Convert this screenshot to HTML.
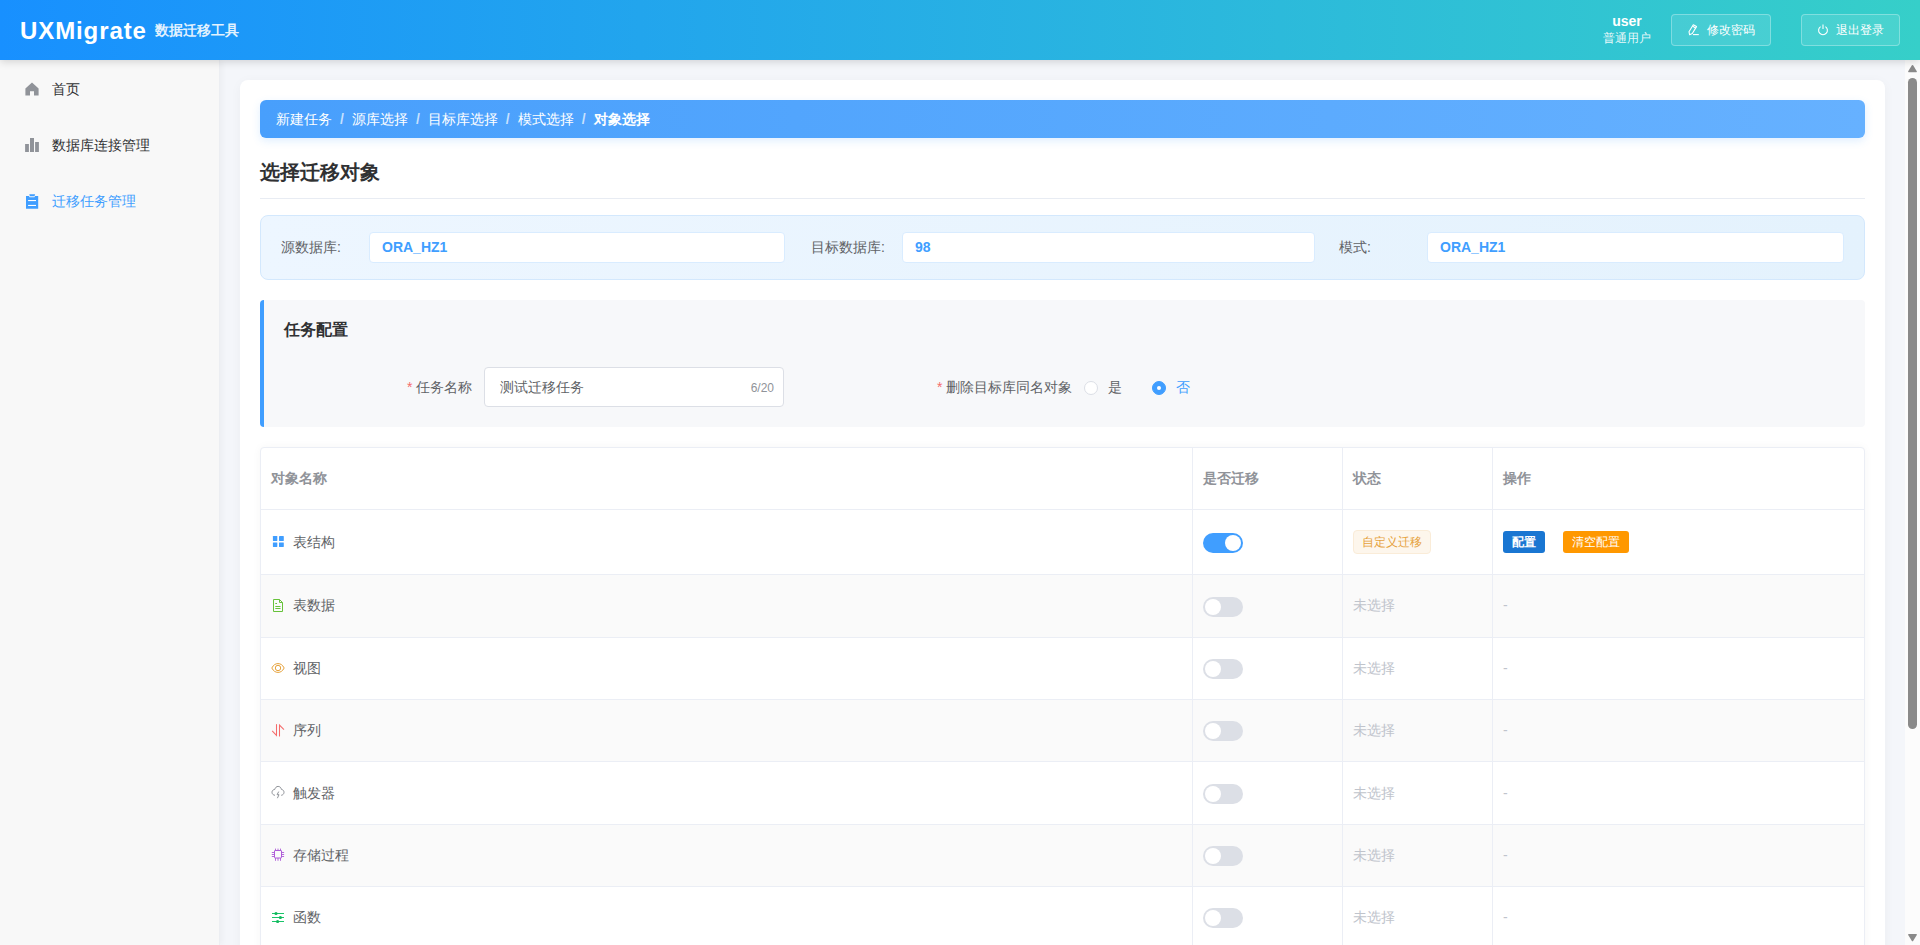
<!DOCTYPE html>
<html><head><meta charset="utf-8">
<style>
*{box-sizing:border-box;margin:0;padding:0}
html,body{width:1920px;height:945px;overflow:hidden;font-family:"Liberation Sans",sans-serif;font-size:14px;color:#606266;background:#f4f6fa}
.hdr{position:absolute;left:0;top:0;width:1920px;height:60px;background:linear-gradient(90deg,#1890ff 0%,#36cfc9 100%);box-shadow:0 2px 8px rgba(0,0,0,.15);z-index:5}
.logo{position:absolute;left:20px;top:16px;font-size:24px;font-weight:bold;color:#fff;line-height:30px;letter-spacing:0.9px}
.sub{position:absolute;left:155px;top:21px;font-size:14px;font-weight:bold;color:rgba(255,255,255,.88);line-height:18px}
.uname{position:absolute;left:1603px;top:12px;width:48px;text-align:center;color:#fff;font-weight:bold;font-size:14px;line-height:18px}
.urole{position:absolute;left:1603px;top:31px;width:48px;text-align:center;color:rgba(255,255,255,.9);font-size:12px;line-height:15px}
.hbtn{position:absolute;top:14px;height:32px;border:1px solid rgba(255,255,255,.3);background:rgba(255,255,255,.1);border-radius:4px;color:#fff;font-size:12px;line-height:30px}
.hbtn svg{position:absolute;top:9px}
.hbtn span{position:absolute;top:0;font-weight:500}
.side{position:absolute;left:0;top:60px;width:220px;height:885px;background:#f8f8f8;border-right:1px solid #eceef2;box-shadow:2px 0 6px rgba(0,0,0,.04);z-index:2}
.mi{position:absolute;left:0;width:219px;height:56px}
.mi svg{position:absolute;left:25px;top:22px}
.mi span{position:absolute;left:52px;top:20px;line-height:18px;color:#303133}
.main{position:absolute;left:220px;top:60px;width:1685px;height:885px;background:#f4f6fa;overflow:hidden}
.card{position:absolute;left:20px;top:20px;width:1645px;height:1000px;background:#fff;border-radius:8px;box-shadow:0 2px 12px rgba(0,0,0,.04)}
.sb{position:absolute;left:1905px;top:60px;width:15px;height:885px;background:#fcfcfc}
.bc{position:absolute;left:20px;top:20px;width:1605px;height:38px;border-radius:6px;background:linear-gradient(90deg,#489ffc,#66b1ff);box-shadow:0 3px 8px rgba(64,158,255,.16);color:#fff;font-size:14px;line-height:38px;padding-left:16px;white-space:nowrap}
.bc .s{display:inline-block;margin:0 8px;font-weight:bold;color:rgba(255,255,255,.7)}
.bc b{font-weight:bold}
.ttl{position:absolute;left:20px;top:80px;font-size:20px;font-weight:bold;color:#303133;line-height:24px}
.hr{position:absolute;left:20px;top:118px;width:1605px;height:1px;background:#e8ecf3}
.info{position:absolute;left:20px;top:135px;width:1605px;height:65px;border:1px solid #d3e8fd;border-radius:8px;background:linear-gradient(90deg,#edf6ff,#e4f2fd)}
.lbl{position:absolute;top:22px;line-height:18px;color:#606266}
.inp{position:absolute;top:16px;height:31px;background:#fff;border:1px solid #d9ecff;border-radius:4px;color:#409eff;font-weight:bold;line-height:28px;padding-left:12px}
.cfg{position:absolute;left:20px;top:220px;width:1605px;height:127px;background:#f7f8fa;border-left:4px solid #409eff;border-radius:4px}
.cfg h3{position:absolute;left:20px;top:20px;font-size:16px;font-weight:bold;color:#303133;line-height:20px}
.req{color:#f56c6c;margin-right:4px}
.tbl{position:absolute;left:20px;top:367px;width:1605px;height:600px;border:1px solid #ebeef5;border-radius:4px;box-shadow:0 0 10px rgba(0,0,0,.04);background:#fff;overflow:hidden}
.row{position:absolute;left:0;width:1603px;border-bottom:1px solid #ebeef5}
.row.st{background:#fafafa}
.c{position:absolute;top:0;bottom:0;border-right:1px solid #ebeef5}
.c>div{position:absolute;left:10px;white-space:nowrap}
.th{font-weight:bold;color:#909399;line-height:18px}
.ic{width:14px;height:14px}
.ic svg{display:block}
.c>.tx{line-height:18px;color:#606266}
.c>.ic+.tx{left:32px}
.c>.ns{color:#c0c4cc}
.tag{height:24px;line-height:22px;padding:0 8px;font-size:12px;color:#e6a23c;background:#fdf6ec;border:1px solid #faecd8;border-radius:4px}
.ob{height:22px;line-height:22px;font-size:12px;color:#fff;border-radius:3px;padding:0 9px}
.b1{background:#1976d2;font-weight:bold}
.b2{background:#ff9800;font-weight:500}
.fl{position:absolute;top:78px;line-height:18px;color:#606266}
.tin{position:absolute;left:220px;top:67px;width:300px;height:40px;background:#fff;border:1px solid #dcdfe6;border-radius:4px}
.tv{position:absolute;left:15px;top:10px;line-height:18px;color:#606266}
.cnt{position:absolute;right:9px;top:12px;font-size:12px;line-height:16px;color:#909399}
.rd{position:absolute;top:81px;width:14px;height:14px;border-radius:50%;border:1px solid #dcdfe6;background:#fff}
.rd.on{background:#409eff;border-color:#409eff}
.rd.on:after{content:"";position:absolute;left:4px;top:4px;width:4px;height:4px;border-radius:50%;background:#fff}
.rl{position:absolute;top:78px;line-height:18px;color:#606266}
.sw{position:absolute;width:40px;height:20px;border-radius:10px;background:#dcdfe6}
.sw:after{content:"";position:absolute;left:2px;top:2px;width:16px;height:16px;border-radius:50%;background:#fff}
.sw.on{background:#409eff}
.sw.on:after{left:22px}
</style></head><body>
<div class="hdr">
  <div class="logo">UXMigrate</div>
  <div class="sub">数据迁移工具</div>
  <div class="uname">user</div>
  <div class="urole">普通用户</div>
  <div class="hbtn" style="left:1671px;width:100px">
    <svg style="left:16px" width="12" height="12" viewBox="0 0 12 12"><g fill="none" stroke="#fff" stroke-width="1.1" stroke-linejoin="round"><path d="M5.3 0.8 L8.5 2.6 L4.3 9.5 L1.6 10.8 L1 7.7 Z"/><path d="M4.7 2.3 L7.6 4"/><path d="M5 10.6 H10.8"/></g></svg>
    <span style="left:35px">修改密码</span>
  </div>
  <div class="hbtn" style="left:1801px;width:99px">
    <svg style="left:15px" width="12" height="12" viewBox="0 0 12 12"><g fill="none" stroke="#fff" stroke-width="1.1"><path d="M3.6 2.6 A4.4 4.4 0 1 0 8.4 2.6"/><path d="M6 0.6 V5"/></g></svg>
    <span style="left:34px">退出登录</span>
  </div>
</div>

<div class="side">
  <div class="mi" style="top:0">
    <svg width="14" height="14" viewBox="0 0 14 14"><path d="M7 0.5 L13.6 6.5 V13.5 H9 V9.2 H5 V13.5 H0.4 V6.5 Z" fill="#909399"/></svg>
    <span>首页</span>
  </div>
  <div class="mi" style="top:56px">
    <svg width="14" height="14" viewBox="0 0 14 14"><g fill="#909399"><rect x="0.1" y="6" width="3.8" height="8"/><rect x="5" y="0" width="4" height="14"/><rect x="10.1" y="4" width="3.8" height="10"/></g></svg>
    <span>数据库连接管理</span>
  </div>
  <div class="mi" style="top:112px">
    <svg width="14" height="15" viewBox="0 0 14 15"><path d="M1 2 H3.9 L4.6 3.3 H9.4 L10.1 2 H13.2 V14.7 H1 Z" fill="#409eff"/><path d="M4.3 0.3 H10.1 L9.5 2.3 H4.9 Z" fill="#409eff"/><rect x="3.1" y="6" width="7.9" height="1.1" fill="#fff"/><rect x="3.1" y="10.9" width="7.9" height="1.1" fill="#fff"/></svg>
    <span style="color:#409eff">迁移任务管理</span>
  </div>
</div>

<div class="main">
 <div class="card">
  <div class="bc">新建任务<span class="s">/</span>源库选择<span class="s">/</span>目标库选择<span class="s">/</span>模式选择<span class="s">/</span><b>对象选择</b></div>
  <div class="ttl">选择迁移对象</div>
  <div class="hr"></div>
  <div class="info">
    <div class="lbl" style="left:20px">源数据库:</div>
    <div class="inp" style="left:108px;width:416px">ORA_HZ1</div>
    <div class="lbl" style="left:550px">目标数据库:</div>
    <div class="inp" style="left:641px;width:413px">98</div>
    <div class="lbl" style="left:1078px">模式:</div>
    <div class="inp" style="left:1166px;width:417px">ORA_HZ1</div>
  </div>
  <div class="cfg">
    <h3>任务配置</h3>
    <div class="fl" style="left:143px"><span class="req">*</span>任务名称</div>
    <div class="tin"><span class="tv">测试迁移任务</span><span class="cnt">6/20</span></div>
    <div class="fl" style="left:673px"><span class="req">*</span>删除目标库同名对象</div>
    <div class="rd" style="left:820px"></div>
    <div class="rl" style="left:844px">是</div>
    <div class="rd on" style="left:888px"></div>
    <div class="rl" style="left:912px;color:#409eff">否</div>
  </div>
  <div class="tbl">
<div class="row" style="top:0;height:62px"><div class="c" style="left:0px;width:932px"><div class="th" style="top:21px">对象名称</div></div><div class="c" style="left:932px;width:150px"><div class="th" style="top:21px">是否迁移</div></div><div class="c" style="left:1082px;width:150px"><div class="th" style="top:21px">状态</div></div><div class="c" style="left:1232px;width:371px;border-right:none"><div class="th" style="top:21px">操作</div></div></div>
<div class="row" style="top:62px;height:65px"><div class="c" style="left:0px;width:932px"><div class="ic" style="top:24px"><svg width="14" height="14" viewBox="0 0 14 14"><g fill="#409eff"><rect x="1.9" y="2.1" width="4.4" height="4.8" rx=".4"/><rect x="8" y="2.1" width="4.8" height="4.8" rx=".4"/><rect x="1.9" y="8.4" width="4.4" height="4.5" rx=".4"/><rect x="8" y="8.4" width="4.8" height="4.5" rx=".4"/></g></svg></div><div class="tx" style="top:23px">表结构</div></div><div class="c" style="left:932px;width:150px"><div class="sw on" style="top:23px"></div></div><div class="c" style="left:1082px;width:150px"><div class="tag" style="top:20px">自定义迁移</div></div><div class="c" style="left:1232px;width:371px;border-right:none"><div class="ob b1" style="top:21px;left:10px">配置</div><div class="ob b2" style="top:21px;left:70px">清空配置</div></div></div>
<div class="row st" style="top:127px;height:63px"><div class="c" style="left:0px;width:932px"><div class="ic" style="top:23px"><svg width="14" height="14" viewBox="0 0 14 14"><g fill="none" stroke="#67c23a" stroke-width="1"><path d="M2.5 1.5 H8.5 L11.5 4.5 V13.5 H2.5 Z"/><path d="M8.5 1.5 V4.5 H11.5"/><path d="M4.3 5.5 H6 M4.3 8.5 H9.5 M4.3 10.5 H9.5"/></g></svg></div><div class="tx" style="top:21px">表数据</div></div><div class="c" style="left:932px;width:150px"><div class="sw" style="top:22px"></div></div><div class="c" style="left:1082px;width:150px"><div class="tx ns" style="top:21px">未选择</div></div><div class="c" style="left:1232px;width:371px;border-right:none"><div class="tx ns" style="top:21px">-</div></div></div>
<div class="row" style="top:190px;height:62px"><div class="c" style="left:0px;width:932px"><div class="ic" style="top:23px"><svg width="14" height="14" viewBox="0 0 14 14"><g fill="none" stroke="#e6a23c" stroke-width="1"><path d="M0.8 7 C2.5 3.8 4.5 2.6 7 2.6 C9.5 2.6 11.5 3.8 13.2 7 C11.5 10.2 9.5 11.4 7 11.4 C4.5 11.4 2.5 10.2 0.8 7 Z"/><circle cx="7" cy="7" r="2.7"/></g></svg></div><div class="tx" style="top:21px">视图</div></div><div class="c" style="left:932px;width:150px"><div class="sw" style="top:21px"></div></div><div class="c" style="left:1082px;width:150px"><div class="tx ns" style="top:21px">未选择</div></div><div class="c" style="left:1232px;width:371px;border-right:none"><div class="tx ns" style="top:21px">-</div></div></div>
<div class="row st" style="top:252px;height:62px"><div class="c" style="left:0px;width:932px"><div class="ic" style="top:23px"><svg width="14" height="14" viewBox="0 0 14 14"><g fill="none" stroke="#f56c6c" stroke-width="1.05" stroke-linecap="round"><path d="M5.5 1.6 V12.4 L1.4 8.2"/><path d="M8.5 12.9 V2.1 L12.7 6.3"/></g></svg></div><div class="tx" style="top:21px">序列</div></div><div class="c" style="left:932px;width:150px"><div class="sw" style="top:21px"></div></div><div class="c" style="left:1082px;width:150px"><div class="tx ns" style="top:21px">未选择</div></div><div class="c" style="left:1232px;width:371px;border-right:none"><div class="tx ns" style="top:21px">-</div></div></div>
<div class="row" style="top:314px;height:63px"><div class="c" style="left:0px;width:932px"><div class="ic" style="top:23px"><svg width="14" height="14" viewBox="0 0 14 14"><g fill="none" stroke="#909399" stroke-width="1"><path d="M4 10.3 C2.2 10.1 1 8.9 1 7.3 C1 5.7 2.2 4.5 3.8 4.4 C4.2 2.6 5.5 1.4 7.1 1.4 C8.8 1.4 10.1 2.6 10.4 4.4 C12 4.6 13 5.8 13 7.3 C13 8.9 11.8 10.1 10.2 10.3"/><path d="M7.7 6.6 L6.1 9.7 H8 L6.4 13.2"/></g></svg></div><div class="tx" style="top:22px">触发器</div></div><div class="c" style="left:932px;width:150px"><div class="sw" style="top:22px"></div></div><div class="c" style="left:1082px;width:150px"><div class="tx ns" style="top:22px">未选择</div></div><div class="c" style="left:1232px;width:371px;border-right:none"><div class="tx ns" style="top:22px">-</div></div></div>
<div class="row st" style="top:377px;height:62px"><div class="c" style="left:0px;width:932px"><div class="ic" style="top:23px"><svg width="14" height="14" viewBox="0 0 14 14"><g fill="none" stroke="#ae5bd8" stroke-width="1"><rect x="3.5" y="2.5" width="7" height="7.5" rx=".5"/><path d="M4.5 0.6 V2.5 M7 0.6 V2.5 M9.5 0.6 V2.5 M4.5 10 V12.8 M7 10 V12.8 M9.5 10 V12.8 M0.8 4.5 H3.5 M0.8 6.5 H3.5 M0.8 8.5 H3.5 M10.5 4.5 H13.1 M10.5 6.5 H13.1 M10.5 8.5 H13.1" stroke-width="0.9"/></g></svg></div><div class="tx" style="top:21px">存储过程</div></div><div class="c" style="left:932px;width:150px"><div class="sw" style="top:21px"></div></div><div class="c" style="left:1082px;width:150px"><div class="tx ns" style="top:21px">未选择</div></div><div class="c" style="left:1232px;width:371px;border-right:none"><div class="tx ns" style="top:21px">-</div></div></div>
<div class="row" style="top:439px;height:62px"><div class="c" style="left:0px;width:932px"><div class="ic" style="top:23px"><svg width="14" height="14" viewBox="0 0 14 14"><g stroke="#19c46a" stroke-width="1" fill="#10b95c"><path d="M1 3.5 H13 M1 7.5 H13 M1 11.5 H13"/><circle cx="5" cy="3.5" r="1.6" stroke="none"/><circle cx="9.4" cy="7.5" r="1.6" stroke="none"/><circle cx="6.6" cy="11.5" r="1.6" stroke="none"/></g></svg></div><div class="tx" style="top:21px">函数</div></div><div class="c" style="left:932px;width:150px"><div class="sw" style="top:21px"></div></div><div class="c" style="left:1082px;width:150px"><div class="tx ns" style="top:21px">未选择</div></div><div class="c" style="left:1232px;width:371px;border-right:none"><div class="tx ns" style="top:21px">-</div></div></div>
  </div>
 </div>
</div>
<div class="sb">
  <svg style="position:absolute;left:0;top:0" width="15" height="885" viewBox="0 0 15 885">
    <path d="M3.2 11.3 Q2.8 12.2 3.8 12.2 H11.2 Q12.2 12.2 11.8 11.3 L8.1 5.3 Q7.5 4.5 6.9 5.3 Z" fill="#8a8a8a"/>
    <rect x="3" y="18" width="9" height="651" rx="4.5" fill="#8a8a8a"/>
    <path d="M3.2 874.9 Q2.8 874 3.8 874 H11.2 Q12.2 874 11.8 874.9 L8.1 880.9 Q7.5 881.7 6.9 880.9 Z" fill="#8a8a8a"/>
  </svg>
</div>
</body></html>
